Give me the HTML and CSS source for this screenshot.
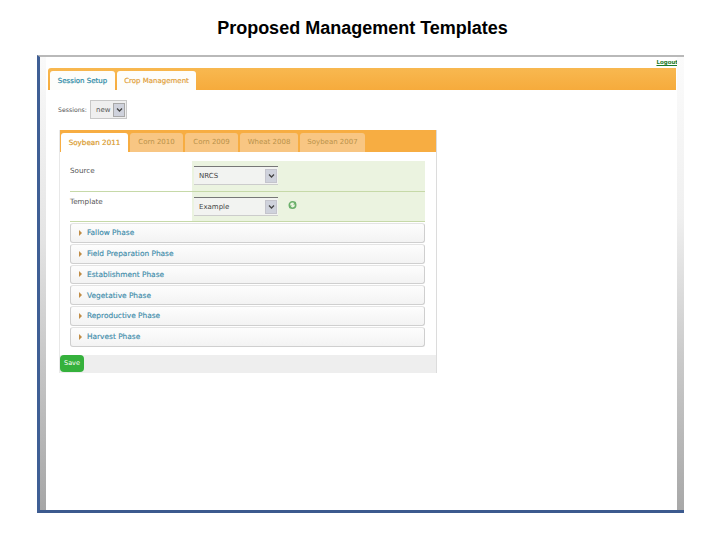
FILE: index.html
```html
<!DOCTYPE html>
<html lang="en">
<head>
<meta charset="utf-8">
<title>Proposed Management Templates</title>
<link rel="stylesheet" href="styles.css">
</head>
<body>
<h1 class="title">Proposed Management Templates</h1>
<div class="frame">
  <div class="band-left"></div>
  <div class="page">
    <div class="logout-row"><a class="logout">Logout</a></div>
    <div class="main-bar">
      <span class="main-tab main-tab-off">Session Setup</span>
      <span class="main-tab main-tab-on">Crop Management</span>
    </div>
    <div class="session-row">
      <span class="session-label">Sessions:</span>
      <span class="session-select"><span class="session-value">new</span><span class="arrow-btn"><svg width="9" height="6" viewBox="0 0 9 6"><path d="M2 1.5 4.5 4 7 1.5" fill="none" stroke="#444" stroke-width="1.3"/></svg></span></span>
    </div>
    <div class="panel">
      <div class="crop-bar">
        <span class="crop-tab crop-tab-on tw-soy11">Soybean 2011</span>
        <span class="crop-tab tw-corn">Corn 2010</span>
        <span class="crop-tab tw-corn">Corn 2009</span>
        <span class="crop-tab tw-wheat">Wheat 2008</span>
        <span class="crop-tab tw-soy07">Soybean 2007</span>
      </div>
      <div class="panel-body">
        <div class="form-row">
          <div class="form-label">Source</div>
          <div class="form-field">
            <span class="drop"><span>NRCS</span><span class="arrow-btn arrow-small"><svg width="9" height="6" viewBox="0 0 9 6"><path d="M2 1.5 4.5 4 7 1.5" fill="none" stroke="#444" stroke-width="1.3"/></svg></span></span>
          </div>
        </div>
        <div class="form-row">
          <div class="form-label">Template</div>
          <div class="form-field">
            <span class="drop"><span>Example</span><span class="arrow-btn arrow-small"><svg width="9" height="6" viewBox="0 0 9 6"><path d="M2 1.5 4.5 4 7 1.5" fill="none" stroke="#444" stroke-width="1.3"/></svg></span></span>
            <svg class="refresh" width="9" height="10" viewBox="0 0 9 10"><circle cx="4.5" cy="5" r="3.2" fill="none" stroke="#6bb06b" stroke-width="1.6"/><path d="M7.8 1.6v3H5zM1.2 8.4v-3H4z" fill="#6bb06b"/></svg>
          </div>
        </div>
        <div class="phases">
          <div class="phase"><span class="tri"></span>Fallow Phase</div>
          <div class="phase"><span class="tri"></span>Field Preparation Phase</div>
          <div class="phase"><span class="tri"></span>Establishment Phase</div>
          <div class="phase"><span class="tri"></span>Vegetative Phase</div>
          <div class="phase"><span class="tri"></span>Reproductive Phase</div>
          <div class="phase"><span class="tri"></span>Harvest Phase</div>
        </div>
      </div>
      <div class="save-bar"><span class="save">Save</span></div>
    </div>
  </div>
  <div class="band-right"></div>
</div>
</body>
</html>
```
FILE: styles.css
```css
* { box-sizing: border-box; }
html, body { margin: 0; padding: 0; background: #fff; }
body { width: 720px; height: 540px; overflow: hidden; font-family: "DejaVu Sans", sans-serif; }
.title {
  margin: 0 0 0 5px;
  height: 55px;
  padding-top: 18px;
  text-align: center;
  font: bold 18px/21px "Liberation Sans", Arial, sans-serif;
  color: #000;
}
.frame {
  margin-left: 37px;
  width: 647px;
  height: 458px;
  display: flex;
  border-top: 2px solid #b9b9b9;
  border-left: 3px solid #3f5f95;
  border-bottom: 3px solid #3c5a8e;
}
.band-left { width: 6px; background: linear-gradient(#fafafa, #e4e4e4 40%, #c4c4c4 70%, #a6a6a6); }
.band-right { width: 7px; margin-left: auto; background: linear-gradient(#fbfbfb, #f0f0f0 35%, #cccccc 65%, #a8a8a8); }
.page { flex: 1; padding: 0 1px 0 2px; min-width: 0; }
.logout-row { height: 11px; display: flex; justify-content: flex-end; margin-right: -2px; }
.logout { font: bold 5.5px/10px "DejaVu Sans", sans-serif; color: #1a7a28; text-decoration: underline; }
.main-bar {
  height: 22px;
  display: flex;
  align-items: flex-end;
  gap: 2px;
  padding-left: 2px;
  background: linear-gradient(#f8b850, #f6ab3c);
  border-radius: 3px 0 0 0;
}
.main-tab {
  height: 19px;
  padding-top: 4px;
  font-size: 7px;
  line-height: 12px;
  text-align: center;
  border-radius: 3px 3px 0 0;
  background: #fdfdfb;
  -webkit-text-stroke: 0.2px currentColor;
}
.main-tab-off { width: 65px; color: #2b8aa5; }
.main-tab-on { width: 79px; color: #e2a23c; }
.session-row { display: flex; align-items: center; gap: 4px; height: 40px; padding: 0 0 1px 10px; }
.session-label { font-size: 6.2px; color: #555; width: 28px; white-space: nowrap; }
.session-select {
  width: 37px;
  height: 19px;
  display: flex;
  align-items: center;
  justify-content: space-between;
  padding: 0 1px 0 5px;
  background: #efefef;
  border: 1px solid #c8c8c8;
  font-size: 7px;
  color: #555;
}
.arrow-btn {
  width: 12px;
  height: 14px;
  display: flex;
  align-items: center;
  justify-content: center;
  background: #cfd2dc;
  border: 1px solid #a8a8a8;
}
.arrow-small { height: 14px; border-color: #c4c4cc; }
.panel {
  width: 378px;
  margin-left: 11px;
  border-right: 1px solid #dcdcdc;
  border-left: 1px solid #e8e8e8;
}
.crop-bar {
  height: 22px;
  display: flex;
  align-items: flex-end;
  gap: 2px;
  padding-left: 1px;
  background: #f7ad42;
}
.crop-tab {
  height: 19px;
  padding-top: 3px;
  text-align: center;
  font-size: 7px;
  line-height: 13px;
  color: #b8924a;
  background: #f8c683;
  border-radius: 3px 3px 0 0;
}
.crop-tab-on { background: #fff; color: #d99a2c; font-size: 7.2px; -webkit-text-stroke: 0.2px currentColor; }
.tw-soy11 { width: 67px; }
.tw-corn { width: 53px; }
.tw-wheat { width: 58px; }
.tw-soy07 { width: 65px; }
.panel-body { padding: 9px 11px 8px 10px; background: #fff; }
.form-row {
  height: 30.5px;
  display: flex;
  border-bottom: 1.5px solid #c6d9a8;
}
.form-label { width: 122px; font-size: 7.2px; line-height: 12px; color: #555; padding-top: 4px; }
.form-field {
  flex: 1;
  display: flex;
  align-items: flex-start;
  gap: 10px;
  background: #ebf3e0;
  padding: 5px 0 0 2px;
}
.drop {
  width: 84px;
  height: 19px;
  display: flex;
  align-items: center;
  justify-content: space-between;
  padding: 1px 1px 0 5px;
  background: #f2f3f1;
  border-top: 1px solid #777;
  border-bottom: 1px solid #ccc;
  font-size: 7px;
  color: #444;
}
.refresh { margin-top: 3px; }
.phases { display: flex; flex-direction: column; gap: 1px; margin-top: 1px; }
.phase {
  height: 19.75px;
  display: flex;
  align-items: center;
  gap: 5px;
  padding-left: 8px;
  border: 1px solid #cfcfcf;
  border-top-color: #e4e4e4;
  border-radius: 3px;
  background: linear-gradient(#fdfdfd, #f3f3f3);
  font-size: 7.4px;
  color: #3f8dab;
  -webkit-text-stroke: 0.15px currentColor;
}
.tri {
  width: 0;
  height: 0;
  border-left: 3px solid #c08c45;
  border-top: 3px solid transparent;
  border-bottom: 3px solid transparent;
}
.save-bar { height: 18px; background: #eeeeee; display: flex; align-items: flex-start; }
.save {
  width: 24px;
  height: 17px;
  background: #35b13c;
  color: #fff;
  border-radius: 4px;
  font-size: 6.5px;
  line-height: 16px;
  text-align: center;
}
```
